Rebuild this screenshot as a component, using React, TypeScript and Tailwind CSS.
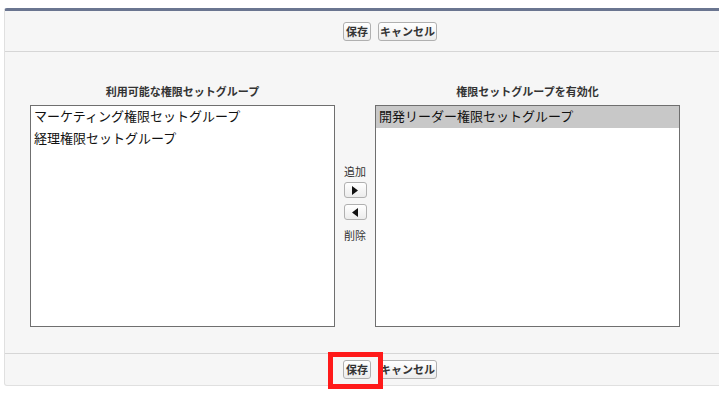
import React from "react";

const font = { fontFamily: '"Noto Sans CJK JP", "Noto Sans", sans-serif' };

function Btn({ label, width }: { label: string; width: string }) {
  return (
    <button
      className={`h-[19px] ${width} rounded-[3px] border border-[#b0b0b0] bg-gradient-to-b from-white to-[#ececec] text-center text-[11px] font-bold leading-[17px] text-[#333]`}
    >
      {label}
    </button>
  );
}

function ArrowBtn({ dir }: { dir: "right" | "left" }) {
  return (
    <button className="flex h-[16px] w-[23px] items-center justify-center rounded-[3px] border border-[#b0b0b0] bg-gradient-to-b from-white to-[#ececec]">
      <svg width="6" height="9" viewBox="0 0 6 9">
        {dir === "right" ? (
          <polygon points="0,0 6,4.5 0,9" fill="#111" />
        ) : (
          <polygon points="6,0 0,4.5 6,9" fill="#111" />
        )}
      </svg>
    </button>
  );
}

function ListBox({ items, selected }: { items: string[]; selected?: number }) {
  return (
    <div className="h-[222px] w-[305px] border border-[#6f6f6f] bg-white">
      {items.map((item, i) => (
        <div
          key={item}
          className={`h-[22px] pl-[3px] text-[13px] leading-[19px] text-[#111] ${
            i === selected ? "bg-[#c8c8c8]" : ""
          }`}
        >
          {item}
        </div>
      ))}
    </div>
  );
}

export default function App() {
  return (
    <div className="h-[396px] w-[719px] overflow-hidden bg-white pt-[8px] pl-[4px]" style={font}>
      <div className="w-[772px] rounded-[3px] border-x border-b border-t-[3px] border-[#e0e0e0] border-t-[#6a7590] bg-[#f6f6f6]">
        {/* top buttons */}
        <div className="flex h-[41px] items-center justify-center gap-[7px] border-b border-[#d6d6d6]">
          <Btn label="保存" width="w-[28px]" />
          <Btn label="キャンセル" width="w-[59px]" />
        </div>

        {/* dueling lists */}
        <div className="flex items-start pt-[32px] pb-[26px] pl-[25px]">
          <div className="flex w-[305px] flex-col items-center">
            <div className="mb-[7px] text-[11px] font-bold leading-[14px] text-[#333]">
              利用可能な権限セットグループ
            </div>
            <ListBox items={["マーケティング権限セットグループ", "経理権限セットグループ"]} />
          </div>

          <div className="flex w-[40px] flex-col items-center pt-[80px]">
            <div className="text-[11px] leading-[14px] text-[#333]">追加</div>
            <div className="mt-[4px]">
              <ArrowBtn dir="right" />
            </div>
            <div className="mt-[6px]">
              <ArrowBtn dir="left" />
            </div>
            <div className="mt-[8px] text-[11px] leading-[14px] text-[#333]">削除</div>
          </div>

          <div className="flex w-[305px] flex-col items-center">
            <div className="mb-[7px] text-[11px] font-bold leading-[14px] text-[#333]">
              権限セットグループを有効化
            </div>
            <ListBox items={["開発リーダー権限セットグループ"]} selected={0} />
          </div>
        </div>

        {/* bottom buttons */}
        <div className="flex h-[32px] items-center justify-center gap-[7px] border-t border-[#d6d6d6]">
          <span className="relative flex">
            <Btn label="保存" width="w-[28px]" />
            <span className="absolute -top-[8px] -left-[15px] z-10 h-[37px] w-[55px] border-[5px] border-[#ff1a1a]" />
          </span>
          <Btn label="キャンセル" width="w-[59px]" />
        </div>
      </div>
    </div>
  );
}
